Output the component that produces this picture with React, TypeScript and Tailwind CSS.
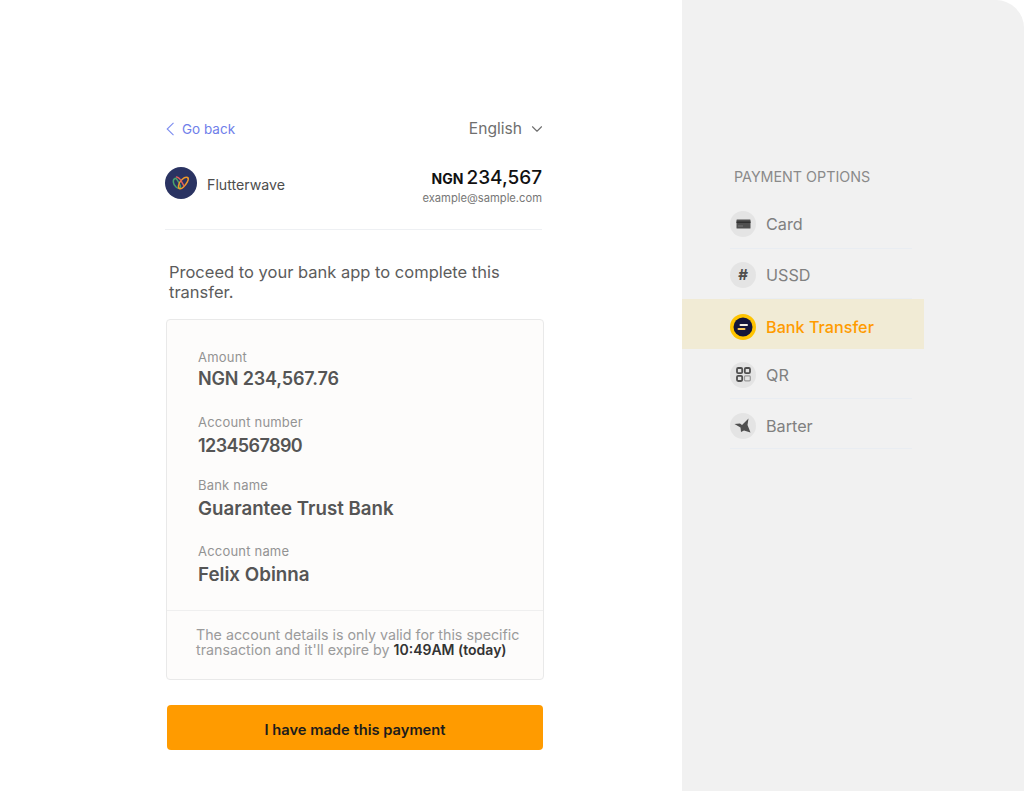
import { ChevronDown } from 'lucide-react';
import type { ReactNode } from 'react';

type Option = {
  label: string;
  icon: ReactNode;
  offset: string;
  active?: boolean;
};

function CardIcon() {
  return (
    <svg width="15" height="10" viewBox="0 0 15 10">
      <rect x="0.5" y="0.5" width="14" height="9" rx="0.5" fill="#4f4f4f" />
      <rect x="0.5" y="2.5" width="14" height="1.5" fill="#2f2f2f" />
      <rect x="2" y="6.5" width="5" height="1" fill="#777" />
    </svg>
  );
}

function HashIcon() {
  return <span className="text-[15px] leading-none font-bold text-[#4f4f4f]">#</span>;
}

function BankIcon() {
  return (
    <svg width="26" height="26" viewBox="0 0 26 26">
      <circle cx="13" cy="13" r="13" fill="#ffc400" />
      <circle cx="13" cy="13" r="9.500" fill="#14163a" />
      <rect x="9.500" y="10" width="8.500" height="2" rx="1" fill="#f3f0e4" />
      <rect x="7.500" y="14" width="8" height="2" rx="1" fill="#f7c75c" />
    </svg>
  );
}

function QrIcon() {
  return (
    <svg width="15" height="15" viewBox="0 0 15 15" fill="none">
      <rect x="1" y="1" width="5.200" height="5.200" rx="1.200" stroke="#4f4f4f" strokeWidth="1.800" />
      <rect x="8.800" y="1" width="5.200" height="5.200" rx="1.200" stroke="#4f4f4f" strokeWidth="1.800" />
      <rect x="1" y="8.800" width="5.200" height="5.200" rx="1.200" stroke="#4f4f4f" strokeWidth="1.800" />
      <rect x="8.500" y="8.800" width="5.800" height="5" rx="1" stroke="#9a9a9a" strokeWidth="1.200" />
    </svg>
  );
}

function BarterIcon() {
  return (
    <svg width="18" height="16" viewBox="0 0 18 16">
      <path d="M0.500 6 L6 5.500 L8 7 L14.500 0.500 L13.500 7 L16.500 14.500 L10 12.500 L7 14 L6.500 9.500 Z" fill="#4f4f4f" />
    </svg>
  );
}

function FlutterwaveLogo() {
  return (
    <svg width="32" height="32" viewBox="0 0 32 32" fill="none" className="shrink-0">
      <circle cx="16" cy="16" r="16" fill="#2a3362" />
      <path d="M10 11.500c-2.500 1-2.200 6 1 8.500s5.500 1.500 4-2-4-7.500-5-6.500z" stroke="#4aa36b" strokeWidth="1.500" />
      <path d="M22.500 10.500c-3-1.500-8.500 4-9 8s2.500 4 5 1.500 6.500-8 4-9.500z" stroke="#f09a2a" strokeWidth="1.500" />
      <path d="M11.500 10c3.500 0 5.500 5.500 7.500 9" stroke="#e0605a" strokeWidth="1.400" strokeLinecap="round" />
    </svg>
  );
}

const options: Option[] = [
  { label: 'Card', icon: <CardIcon />, offset: '' },
  { label: 'USSD', icon: <HashIcon />, offset: 'pt-[2px]' },
  { label: 'Bank Transfer', icon: <BankIcon />, offset: 'pt-[5px]', active: true },
  { label: 'QR', icon: <QrIcon />, offset: 'pt-[2px]' },
  { label: 'Barter', icon: <BarterIcon />, offset: 'pt-[5px]' },
];

const details = [
  { label: 'Amount', value: 'NGN 234,567.76', gap: 'mt-0', valueClass: 'mt-[2px] text-[18px] tracking-[-0.15px]' },
  { label: 'Account number', value: '1234567890', gap: 'mt-[23px]', valueClass: 'mt-[4px] text-[18px] tracking-[-0.6px]' },
  { label: 'Bank name', value: 'Guarantee Trust Bank', gap: 'mt-[19px]', valueClass: 'mt-[4px] text-[18.700px]' },
  { label: 'Account name', value: 'Felix Obinna', gap: 'mt-[22px]', valueClass: 'mt-[4px] text-[18.800px]' },
];

export default function App() {
  return (
    <div className="flex h-[791px] w-[1024px] overflow-hidden bg-white font-['Inter',sans-serif]">
      <main className="w-[682px] shrink-0 pt-[118px] pl-[165px]">
        <div className="w-[379px]">
          <div className="flex h-[22px] w-[378px] items-center justify-between">
            <a className="flex items-center text-[13.500px] text-[#6f80ea]">
              <svg width="9" height="14" viewBox="0 0 9 14" fill="none" className="ml-[1px]">
                <path d="M7.500 0.800 L1.200 7 L7.500 13.200" stroke="#7d8df0" strokeWidth="1.100" />
              </svg>
              <span className="ml-[7px]">Go back</span>
            </a>
            <div className="flex items-center text-[15.600px] text-[#6f6f6f]">
              English
              <ChevronDown size={18} strokeWidth={1.500} className="mr-[-3px] ml-[6px]" />
            </div>
          </div>

          <div className="mt-[24px] flex h-[66px] w-[377px] items-start justify-between border-b border-[#eef0f3]">
            <div className="mt-[3px] flex items-center gap-[10px]">
              <FlutterwaveLogo />
              <span className="pt-[4px] text-[14.200px] text-[#4d4d4d]">Flutterwave</span>
            </div>
            <div className="mt-[2px] text-right">
              <div className="flex items-baseline justify-end gap-[3px] text-[#111]">
                <span className="text-[14px] font-bold">NGN</span>
                <span className="text-[19px] leading-[24px] font-medium">234,567</span>
              </div>
              <div className="mt-[1px] text-[11.200px] leading-[14px] text-[#777]">example@sample.com</div>
            </div>
          </div>

          <p className="mt-[32px] pl-[4px] text-[16.500px] leading-[20px] text-[#5c5c5c]">
            Proceed to your bank app to complete this transfer.
          </p>

          <section className="mt-[17px] ml-[1px] h-[361px] w-[378px] rounded-[4px] border border-[#e9e9e9] bg-[#fdfcfb]">
            <div className="h-[290px] pt-[29px] pl-[31px]">
              {details.map((item) => (
                <div key={item.label} className={item.gap}>
                  <div className="text-[13px] leading-[16px] tracking-[0.2px] text-[#939393]">{item.label}</div>
                  <div className={`${item.valueClass} leading-[24px] font-semibold text-[#555]`}>{item.value}</div>
                </div>
              ))}
            </div>
            <div className="border-t border-[#efefef] pt-[16px] pl-[29px] text-[14.250px] leading-[15px] text-[#9b9b9b]">
              The account details is only valid for this specific
              <br />
              transaction and it'll expire by{' '}
              <span className="text-[14px] font-semibold text-[#333]">10:49AM (today)</span>
            </div>
          </section>

          <button className="mt-[25px] ml-[2px] flex h-[45px] w-[376px] items-center justify-center rounded-[4px] bg-[#ff9b00] pt-[5px] text-[14.700px] font-semibold text-[#1c1c1c]">
            I have made this payment
          </button>
        </div>
      </main>

      <aside className="flex-1 rounded-tr-[28px] bg-[#f1f1f1] pt-[168px]">
        <h2 className="pl-[52px] text-[14.300px] leading-[17px] text-[#8a8a8a]">PAYMENT OPTIONS</h2>
        <ul className="mt-[14px] w-[242px]">
          {options.map((option) => (
            <li
              key={option.label}
              className={`flex h-[50px] items-center pl-[48px] ${option.active ? 'bg-[#f1ebd5]' : ''}`}
            >
              <div
                className={`flex h-full w-[182px] items-center gap-[10px] ${option.offset} ${
                  option.active ? '' : 'border-b border-[#e9edf2]'
                }`}
              >
                <span className="flex h-[26px] w-[26px] items-center justify-center rounded-full bg-[#e4e4e4]">
                  {option.icon}
                </span>
                <span
                  className={
                    option.active
                      ? 'pt-[1px] text-[16.200px] font-medium text-[#ff9b00]'
                      : 'pt-[1px] text-[16.200px] text-[#808080]'
                  }
                >
                  {option.label}
                </span>
              </div>
            </li>
          ))}
        </ul>
      </aside>
    </div>
  );
}
